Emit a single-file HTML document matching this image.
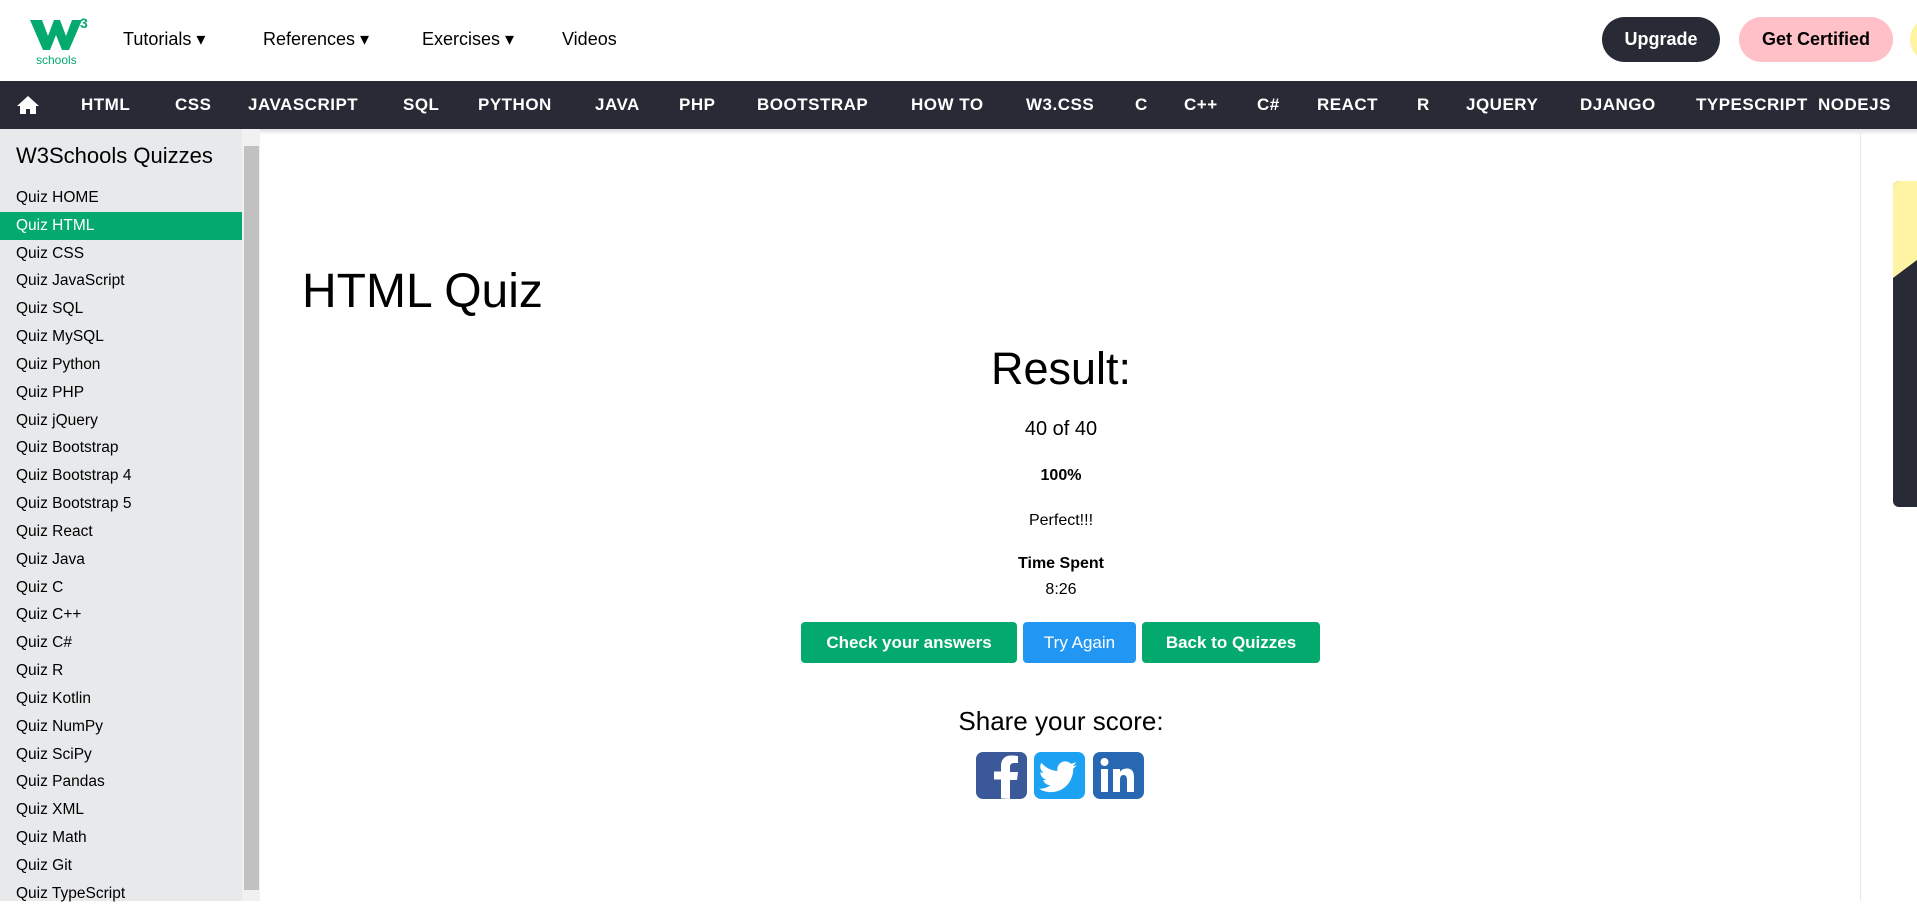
<!DOCTYPE html>
<html><head><meta charset="utf-8"><style>
*{margin:0;padding:0;box-sizing:border-box}
body{width:1917px;height:901px;overflow:hidden;background:#fff;font-family:"Liberation Sans",sans-serif;position:relative;color:#000}
.a{position:absolute;white-space:nowrap}
.top a{font-size:18px;color:#000}
.nav{position:absolute;left:0;top:81px;width:1917px;height:48px;background:#282a35}
.nav span{position:absolute;top:14px;color:#fff;font-weight:bold;font-size:17px;letter-spacing:.5px}
.side{position:absolute;left:0;top:129px;width:242px;height:772px;background:#e7e9eb}
.side div{height:27.83px;line-height:27.83px;padding-left:16px;font-size:15.5px;color:#000}
.btn{position:absolute;top:622px;height:41px;line-height:41px;color:#fff;text-align:center;border-radius:4px;font-size:17px}
</style></head><body>
<svg class="a" style="left:28px;top:12px" width="70" height="56" viewBox="0 0 70 56">
<path d="M2 8h12l6 16 6-16h6l6 16 6-16h10l-13 30h-7l-6-15-6 15h-7z" fill="#04aa6d"/>
<text x="52" y="16" font-size="14" font-weight="bold" fill="#04aa6d" font-family="Liberation Sans">3</text>
<text x="8" y="52" font-size="12" fill="#04aa6d" font-family="Liberation Sans">schools</text></svg>
<div class="top">
<a class="a" style="left:123px;top:29px">Tutorials ▾</a>
<a class="a" style="left:263px;top:29px">References ▾</a>
<a class="a" style="left:422px;top:29px">Exercises ▾</a>
<a class="a" style="left:562px;top:29px">Videos</a>
</div>
<div class="a" style="left:1602px;top:17px;width:118px;height:45px;border-radius:23px;background:#282a35;color:#fff;font-size:18px;font-weight:bold;text-align:center;line-height:45px">Upgrade</div>
<div class="a" style="left:1739px;top:17px;width:154px;height:45px;border-radius:23px;background:#ffc0c7;color:#000;font-size:18px;font-weight:bold;text-align:center;line-height:45px">Get Certified</div>
<div class="a" style="left:1910px;top:17px;width:45px;height:45px;border-radius:23px;background:#fff4a3"></div>
<div class="nav">
<svg style="position:absolute;left:16px;top:14px" width="24" height="20" viewBox="0 0 24 20"><path d="M12 1L1 11h3v8h6v-5h4v5h6v-8h3z" fill="#fff"/></svg>
<span style="left:81px">HTML</span><span style="left:175px">CSS</span><span style="left:248px">JAVASCRIPT</span><span style="left:403px">SQL</span><span style="left:478px">PYTHON</span><span style="left:595px">JAVA</span><span style="left:679px">PHP</span><span style="left:757px">BOOTSTRAP</span><span style="left:911px">HOW TO</span><span style="left:1026px">W3.CSS</span><span style="left:1135px">C</span><span style="left:1184px">C++</span><span style="left:1257px">C#</span><span style="left:1317px">REACT</span><span style="left:1417px">R</span><span style="left:1466px">JQUERY</span><span style="left:1580px">DJANGO</span><span style="left:1696px">TYPESCRIPT</span><span style="left:1818px">NODEJS</span>
</div>
<div class="a" style="left:0;top:129px;width:1917px;height:6px;background:linear-gradient(#ddd,#fff)"></div>
<div class="side">
<div style="font-size:22px;height:42px;line-height:42px;padding-top:6px">W3Schools Quizzes</div>
<div style="margin-top:13px">Quiz HOME</div>
<div style="background:#04aa6d;color:#fff">Quiz HTML</div>
<div>Quiz CSS</div><div>Quiz JavaScript</div><div>Quiz SQL</div><div>Quiz MySQL</div><div>Quiz Python</div><div>Quiz PHP</div><div>Quiz jQuery</div><div>Quiz Bootstrap</div><div>Quiz Bootstrap 4</div><div>Quiz Bootstrap 5</div><div>Quiz React</div><div>Quiz Java</div><div>Quiz C</div><div>Quiz C++</div><div>Quiz C#</div><div>Quiz R</div><div>Quiz Kotlin</div><div>Quiz NumPy</div><div>Quiz SciPy</div><div>Quiz Pandas</div><div>Quiz XML</div><div>Quiz Math</div><div>Quiz Git</div><div>Quiz TypeScript</div>
</div>
<div class="a" style="left:242px;top:129px;width:18px;height:772px;background:#f1f1f1"></div>
<div class="a" style="left:244px;top:146px;width:15px;height:744px;background:#c1c1c1"></div>
<div class="a" style="left:1860px;top:129px;width:1px;height:772px;background:#e7e9eb"></div>
<svg class="a" style="left:1893px;top:181px" width="24" height="326"><path d="M6 0H24V326H6a6 6 0 0 1-6-6V6a6 6 0 0 1 6-6z" fill="#282a35"/><path d="M6 0H24V79L0 97V6a6 6 0 0 1 6-6z" fill="#fff4a3"/></svg>
<div class="a" style="left:302px;top:264px;font-size:48px">HTML Quiz</div>
<div class="a" style="left:700px;width:722px;text-align:center;top:343px;font-size:45px">Result:</div>
<div class="a" style="left:700px;width:722px;text-align:center;top:418px;font-size:20px">40 of 40</div>
<div class="a" style="left:700px;width:722px;text-align:center;top:467px;font-size:16px;font-weight:bold">100%</div>
<div class="a" style="left:700px;width:722px;text-align:center;top:512px;font-size:16px">Perfect!!!</div>
<div class="a" style="left:700px;width:722px;text-align:center;top:555px;font-size:16px;font-weight:bold">Time Spent</div>
<div class="a" style="left:700px;width:722px;text-align:center;top:581px;font-size:16px">8:26</div>
<div class="btn" style="left:801px;width:216px;background:#04aa6d;font-weight:bold">Check your answers</div>
<div class="btn" style="left:1023px;width:113px;background:#2196f3">Try Again</div>
<div class="btn" style="left:1142px;width:178px;background:#04aa6d;font-weight:bold">Back to Quizzes</div>
<div class="a" style="left:700px;width:722px;text-align:center;top:706px;font-size:26px">Share your score:</div>
<svg class="a" style="left:976px;top:752px" width="170" height="47" viewBox="0 0 170 47">
<rect x="0" y="0" width="51" height="47" rx="7" fill="#3b5998"/>
<path d="M34 47V28h7l1-8h-8v-5c0-2 1-4 4-4h4V4c-1 0-4-.5-7-.5-6 0-10 4-10 10v6h-7v8h7v19z" fill="#fff"/>
<rect x="58" y="0" width="51" height="47" rx="7" fill="#1da1f2"/>
<path d="M101 13c-1.5.7-3 1-4.5 1.2 1.6-1 2.8-2.5 3.4-4.3-1.5.9-3.2 1.5-5 1.9-3-3.2-8-3.3-11.1-.3-2 1.9-2.9 4.7-2.3 7.4-6.3-.3-12.2-3.3-16.1-8.2-2.1 3.6-1 8.1 2.4 10.4-1.2 0-2.4-.4-3.5-1 0 3.7 2.6 6.9 6.3 7.7-1.1.3-2.3.4-3.5.1 1 3.2 4 5.4 7.3 5.4-3.3 2.6-7.5 3.8-11.6 3.3 3.6 2.3 7.8 3.5 12 3.5 14.5 0 22.6-12.1 22.5-23.7 1.6-1.1 2.9-2.5 4-4z" fill="#fff"/>
<rect x="117" y="0" width="51" height="47" rx="7" fill="#2867b2"/>
<rect x="125" y="17" width="7" height="23" fill="#fff"/><circle cx="128.5" cy="10" r="4" fill="#fff"/>
<path d="M137 17h7v3c1.5-2.5 4-3.5 7-3.5 5 0 7 3 7 9V40h-7V28c0-3-1-5-3.5-5S144 25 144 28v12h-7z" fill="#fff"/>
</svg>
</body></html>
